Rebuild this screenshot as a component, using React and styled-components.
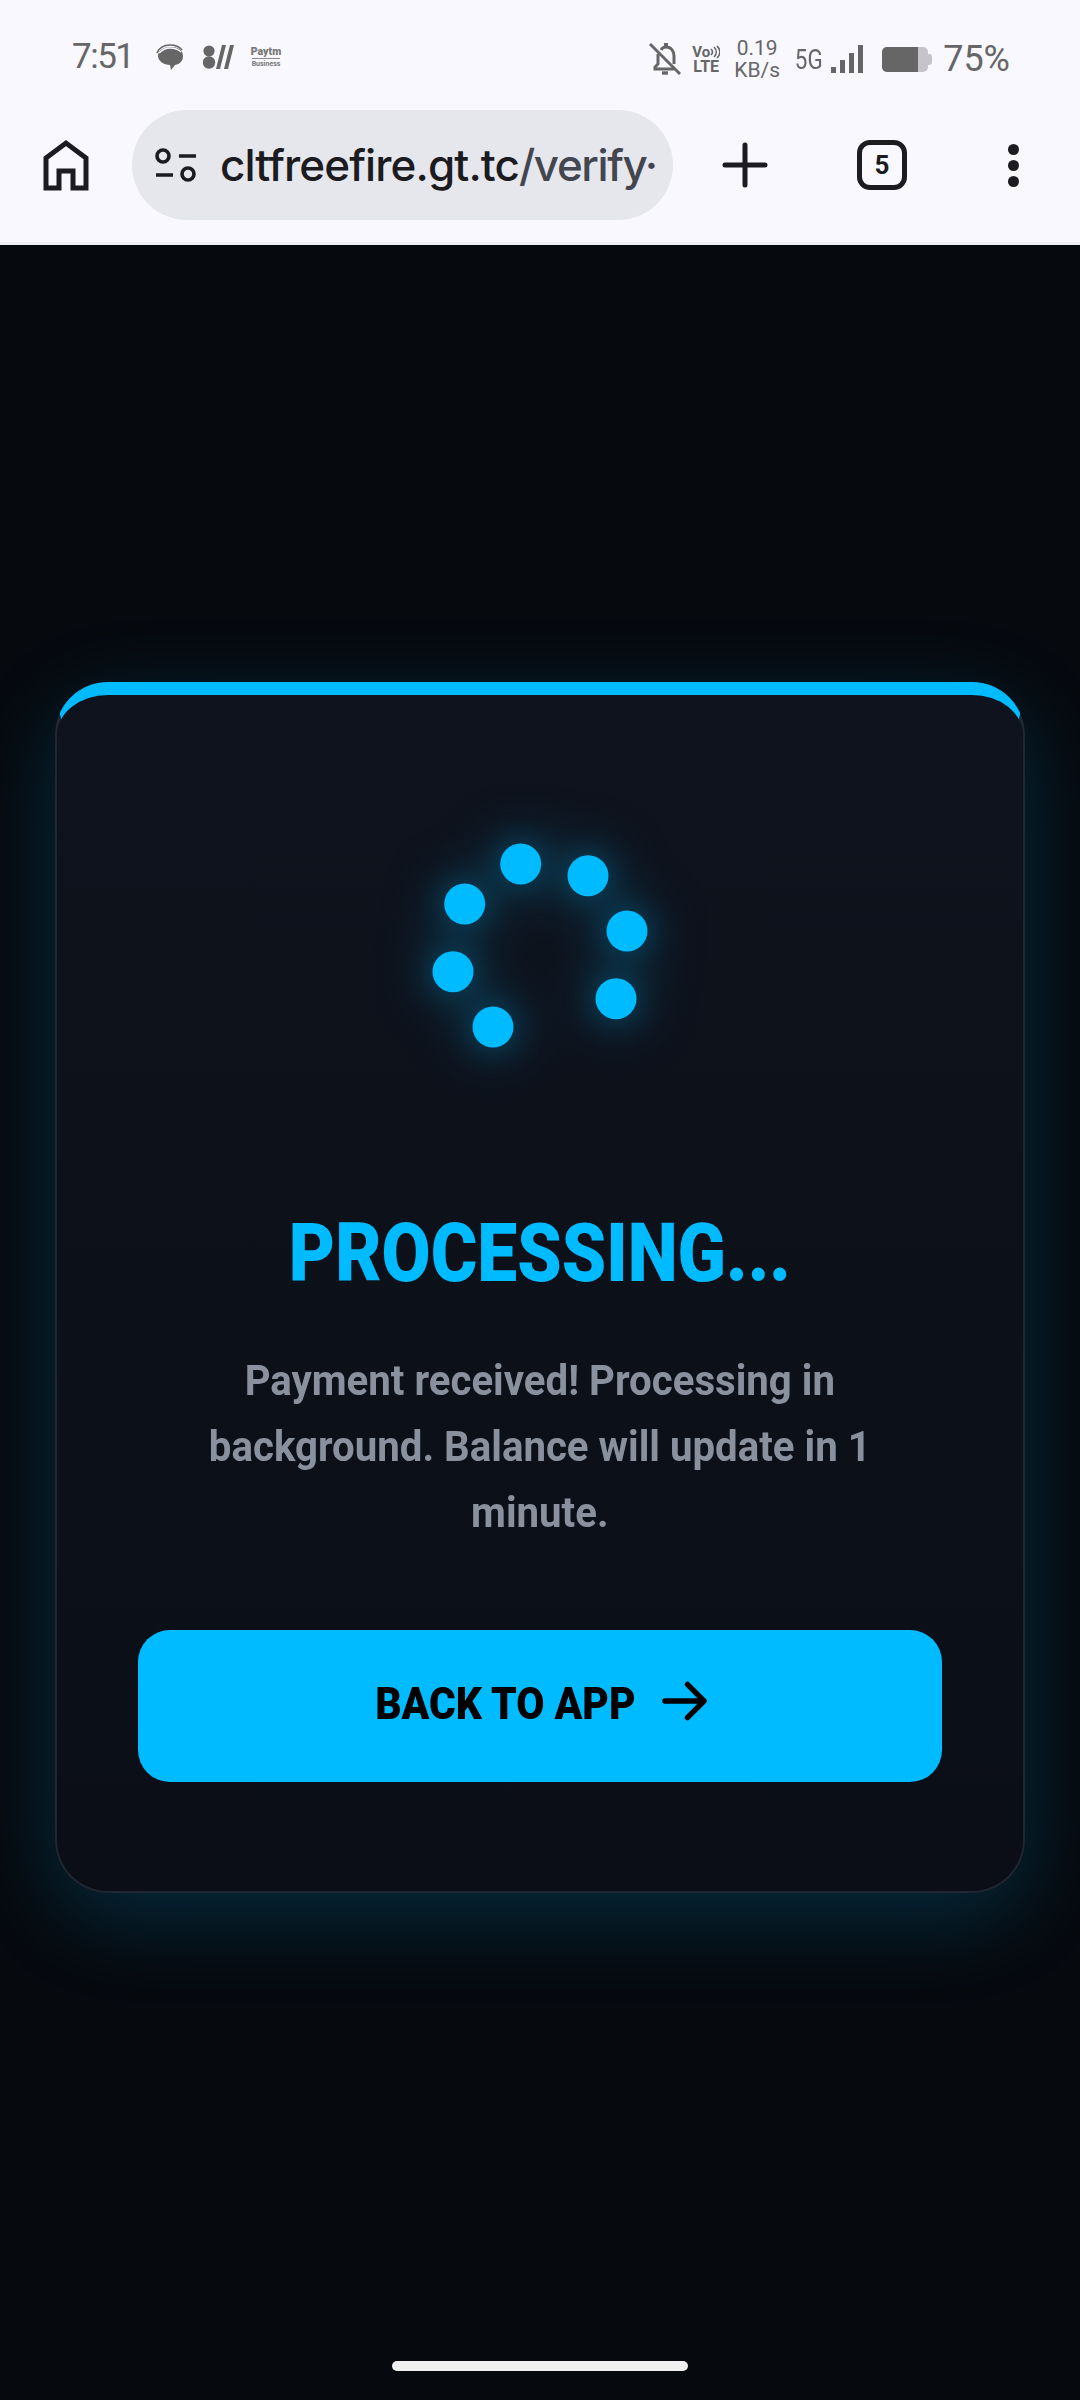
import React from 'react';
import styled, { createGlobalStyle } from 'styled-components';

const GlobalStyle = createGlobalStyle`
  html, body {
    margin: 0;
    padding: 0;
    background: #06090e;
  }
  * {
    box-sizing: border-box;
  }
`;

const spinnerDots = [
  [120.7, 54], [188, 65.7], [227, 121], [216, 188.7], [93, 217], [53, 161.7], [64.7, 94],
];

const App = () => {
  return (
    <>
      <GlobalStyle />
      <Page>
        <Chrome>
          <StatusBar>
            <StatusLeft>
              <Time>7:51</Time>
              <svg width="28" height="28" viewBox="0 0 28 28" style={{ marginLeft: 22 }}>
                <path d="M15 4c7 0 12 3 12 9 0 5-3 8-8 9l-4 5-1-5C8 22 2 18 2 13c0-6 6-9 13-9z" fill="#666" />
                <path d="M1 10c2-5 7-8 13-8 5 0 9 1 12 5" stroke="#666" strokeWidth="1.6" fill="none" />
                <path d="M3 10c3-3 7-5 11-5s8 1 11 4" stroke="#f8f8fe" strokeWidth="1.6" fill="none" />
              </svg>
              <svg width="31" height="24" viewBox="0 0 31 24" style={{ marginLeft: 19 }}>
                <circle cx="6" cy="6" r="5.6" fill="#666" />
                <circle cx="6" cy="17.5" r="6.2" fill="#666" />
                <path d="M13 24L19 0h4l-6 24zM21 24L27 0h4l-6 24z" fill="#666" />
              </svg>
              <PaytmMark>
                <PaytmName>Paytm</PaytmName>
                <PaytmRule />
                <PaytmSub>Business</PaytmSub>
              </PaytmMark>
            </StatusLeft>
            <StatusRight>
              <svg width="32" height="34" viewBox="0 0 32 34" fill="none" stroke="#666" strokeWidth="3">
                <path d="M1 2l30 30" />
                <path d="M9 12v10l-3 3v2h19" />
                <path d="M12 8c1-2 3-3 5-3 5 0 8 4 8 9v8" />
                <path d="M17 1v4" strokeWidth="4" />
                <path d="M13 31h6" strokeWidth="3.4" />
              </svg>
              <Volte>
                <VolteTop>
                  Vo
                  <svg width="10" height="14" viewBox="0 0 10 14" fill="none" stroke="#666" strokeWidth="1.6">
                    <path d="M1 4c2 2 2 4 0 6M4 2c3 3 3 7 0 10M7 1c4 4 4 8 0 12" />
                  </svg>
                </VolteTop>
                <VolteBottom>LTE</VolteBottom>
              </Volte>
              <Speed>
                <span>0.19</span>
                <span>KB/s</span>
              </Speed>
              <Network>5G</Network>
              <svg width="32" height="28" viewBox="0 0 32 28" fill="#666">
                <rect x="0" y="22" width="5" height="6" />
                <rect x="9" y="15" width="5" height="13" />
                <rect x="18" y="8" width="5" height="20" />
                <rect x="27" y="0" width="5" height="28" />
              </svg>
              <Battery>
                <BatteryLevel />
              </Battery>
              <Percent>75%</Percent>
            </StatusRight>
          </StatusBar>

          <Toolbar>
            <HomeButton>
              <svg width="46" height="52" viewBox="0 0 46 52" fill="none" stroke="#1b1b20" strokeWidth="5">
                <path d="M3 49V19L23 4l20 15v30H30V32H16v17z" />
              </svg>
            </HomeButton>
            <Omnibox>
              <svg width="42" height="34" viewBox="0 0 42 34" fill="none" stroke="#1b1b20" strokeWidth="3.6">
                <circle cx="8" cy="8" r="6" />
                <path d="M24 8h17M1 27h17" />
                <circle cx="33" cy="26" r="6" />
              </svg>
              <Url>
                cltfreefire.gt.tc<UrlPath>/verify·</UrlPath>
              </Url>
            </Omnibox>
            <PlusButton>
              <svg width="46" height="46" viewBox="0 0 46 46" fill="none" stroke="#1b1b20" strokeWidth="5" strokeLinecap="round">
                <path d="M23 3v40M3 23h40" />
              </svg>
            </PlusButton>
            <TabCount>5</TabCount>
            <MenuDots>
              <MenuDot />
              <MenuDot />
              <MenuDot />
            </MenuDots>
          </Toolbar>
        </Chrome>
        <ChromeEdge />

        <Card>
          <Spinner viewBox="0 0 280 260">
            {spinnerDots.map(([cx, cy]) => (
              <circle key={cx} cx={cx} cy={cy} r="20.5" fill="#00bbff" />
            ))}
          </Spinner>
          <Title>PROCESSING...</Title>
          <Message>
            <MessageLine>Payment received! Processing in</MessageLine>
            <MessageLine>background. Balance will update in 1</MessageLine>
            <MessageLine>minute.</MessageLine>
          </Message>
          <BackButton>
            <ButtonLabel>BACK TO APP</ButtonLabel>
            <Arrow viewBox="0 0 46 40" fill="none" stroke="#000" strokeWidth="5.5" strokeLinecap="round" strokeLinejoin="round">
              <path d="M3 20h39M26 3l17 17-17 17" />
            </Arrow>
          </BackButton>
        </Card>

        <HomeIndicator />
      </Page>
    </>
  );
};

export default App;

const Page = styled.div`
  width: 1080px;
  height: 2400px;
  display: flex;
  flex-direction: column;
  overflow: hidden;
  background: #06090e;
  font-family: Roboto, "Liberation Sans", sans-serif;
`;

const Chrome = styled.div`
  height: 242px;
  background: #f8f8fe;
  flex-shrink: 0;
`;

const ChromeEdge = styled.div`
  height: 3px;
  background: #ededf3;
  flex-shrink: 0;
`;

const StatusBar = styled.div`
  height: 110px;
  padding: 37px 70px 0 72px;
  display: flex;
  justify-content: space-between;
  align-items: flex-start;
  color: #666;
`;

const StatusLeft = styled.div`
  display: flex;
  align-items: center;
  height: 40px;
`;

const StatusRight = styled.div`
  display: flex;
  align-items: center;
  height: 44px;
  gap: 11px;
`;

const Time = styled.span`
  font-size: 35px;
  line-height: 40px;
  letter-spacing: -1.5px;
`;

const PaytmMark = styled.div`
  margin-left: 18px;
  width: 29px;
  display: flex;
  flex-direction: column;
  align-items: center;
  color: #777;
`;

const PaytmName = styled.span`
  font-size: 10.5px;
  line-height: 10px;
  font-weight: 900;
`;

const PaytmRule = styled.span`
  width: 28px;
  height: 1px;
  margin: 1px 0;
  background: #888;
`;

const PaytmSub = styled.span`
  font-size: 7px;
  line-height: 8px;
  font-weight: 700;
`;

const Volte = styled.div`
  display: flex;
  flex-direction: column;
  align-items: center;
  width: 28px;
  font-weight: 700;
`;

const VolteTop = styled.span`
  display: flex;
  align-items: center;
  font-size: 15px;
  line-height: 15px;
`;

const VolteBottom = styled.span`
  font-size: 16px;
  line-height: 14px;
`;

const Speed = styled.div`
  display: flex;
  flex-direction: column;
  align-items: center;
  width: 44px;
  margin-left: 4px;
  font-size: 21px;
  line-height: 22px;
`;

const Network = styled.span`
  font-size: 28px;
  transform: scaleX(0.8);
  width: 28px;
  margin-left: 2px;
  text-align: center;
`;

const Battery = styled.div`
  position: relative;
  width: 46px;
  height: 25px;
  margin-left: 8px;
  margin-right: 4px;
  border-radius: 5px;
  background: #c6c4ca;

  &::after {
    content: '';
    position: absolute;
    right: -4px;
    top: 7px;
    width: 4px;
    height: 11px;
    border-radius: 0 3px 3px 0;
    background: #c6c4ca;
  }
`;

const BatteryLevel = styled.div`
  width: 36px;
  height: 100%;
  border-radius: 5px 0 0 5px;
  background: #666;
`;

const Percent = styled.span`
  font-size: 36px;
  line-height: 44px;
`;

const Toolbar = styled.div`
  display: flex;
  align-items: center;
  height: 110px;
  padding-left: 43px;
`;

const HomeButton = styled.div`
  display: flex;
  align-items: center;
  justify-content: center;
  flex-shrink: 0;
  height: 52px;
`;

const PlusButton = styled(HomeButton)`
  margin-left: 49px;
`;

const Omnibox = styled.div`
  width: 541px;
  height: 110px;
  margin-left: 43px;
  padding-left: 23px;
  display: flex;
  align-items: center;
  gap: 23px;
  border-radius: 55px;
  background: #e6e6ed;
  overflow: hidden;
  flex-shrink: 0;
`;

const Url = styled.span`
  font-family: Inter, Roboto, sans-serif;
  font-size: 44px;
  font-weight: 500;
  letter-spacing: -0.9px;
  white-space: nowrap;
  color: #1b1b20;
`;

const UrlPath = styled.span`
  letter-spacing: -1.4px;
  color: #44464f;
`;

const TabCount = styled.div`
  width: 50px;
  height: 50px;
  margin-left: 89px;
  display: flex;
  align-items: center;
  justify-content: center;
  flex-shrink: 0;
  border: 5px solid #1b1b20;
  border-radius: 13px;
  font-size: 26px;
  font-weight: 700;
  color: #1b1b20;
`;

const MenuDots = styled.div`
  margin-left: 101px;
  display: flex;
  flex-direction: column;
  gap: 5px;
`;

const MenuDot = styled.span`
  width: 11px;
  height: 11px;
  border-radius: 50%;
  background: #1b1b20;
`;

const Card = styled.div`
  width: 970px;
  height: 1211px;
  margin: 437px 0 0 55px;
  padding-top: 115px;
  display: flex;
  flex-direction: column;
  align-items: center;
  flex-shrink: 0;
  border: 2px solid #1f2733;
  border-top: 13px solid #00bbff;
  border-radius: 53px;
  background: linear-gradient(180deg, #0e131d 0%, #0b0e16 100%);
  box-shadow: 0 24px 90px rgba(0, 187, 255, 0.2);
`;

const Spinner = styled.svg`
  width: 280px;
  height: 260px;
  flex-shrink: 0;
  overflow: visible;
  filter: drop-shadow(0 0 16px rgba(0, 187, 255, 0.3)) drop-shadow(0 0 30px rgba(0, 187, 255, 0.35));
`;

const Title = styled.h1`
  margin: 139px 0 0;
  font-size: 81px;
  line-height: 90px;
  font-weight: 900;
  white-space: nowrap;
  color: #00bbff;
  transform: scaleX(0.878);
`;

const Message = styled.div`
  margin-top: 49px;
  display: flex;
  flex-direction: column;
  align-items: center;
  font-size: 42px;
  line-height: 66px;
  font-weight: 700;
  color: #8a919e;
  transform: scaleX(0.957);
`;

const MessageLine = styled.span`
  white-space: nowrap;
`;

const BackButton = styled.button`
  width: 804px;
  height: 152px;
  margin-top: 84px;
  padding: 0 0 6px;
  display: flex;
  align-items: center;
  justify-content: center;
  gap: 24px;
  border: 0;
  border-radius: 32px;
  background: #00bbff;
  font-family: inherit;
  flex-shrink: 0;
`;

const ButtonLabel = styled.span`
  margin: 0 -11px;
  font-size: 45px;
  font-weight: 900;
  color: #000;
  white-space: nowrap;
  transform: scaleX(0.908);
`;

const Arrow = styled.svg`
  width: 45px;
  height: 40px;
  margin-bottom: 5px;
  flex-shrink: 0;
`;

const HomeIndicator = styled.div`
  width: 296px;
  height: 10px;
  margin: 468px auto 0;
  border-radius: 5px;
  background: #f0f0f0;
  flex-shrink: 0;
`;
